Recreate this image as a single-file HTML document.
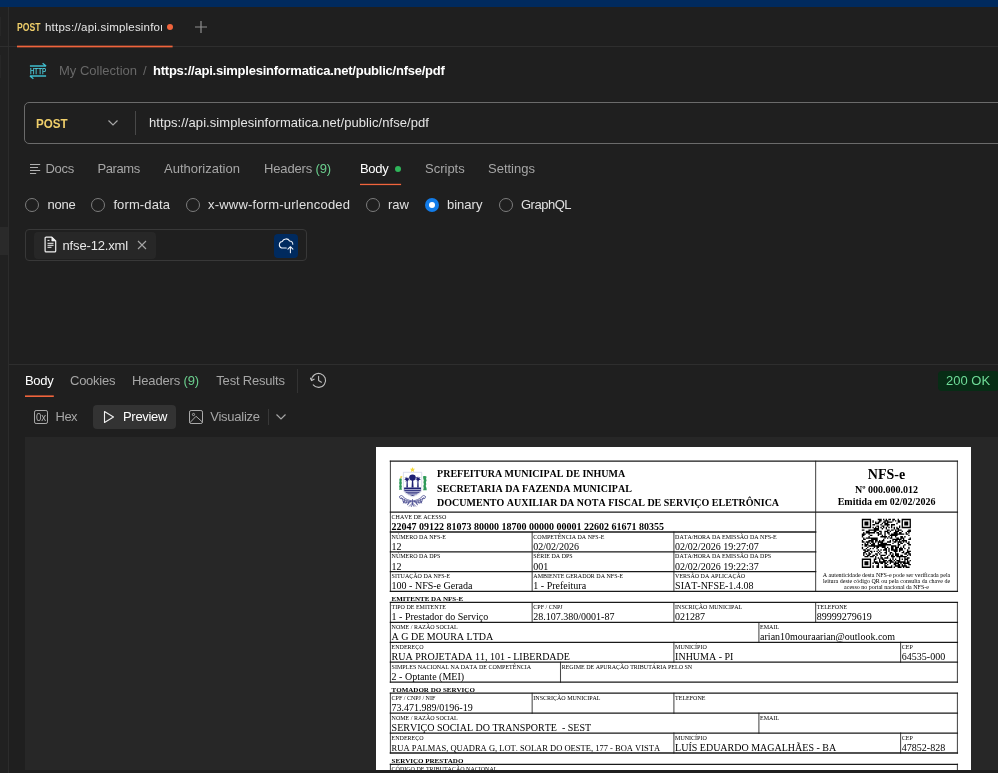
<!DOCTYPE html>
<html lang="pt-BR">
<head>
<meta charset="utf-8">
<title>Postman - nfse/pdf</title>
<style>
*{box-sizing:border-box;margin:0;padding:0}
html,body{width:998px;height:773px;overflow:hidden;background:#1f1f1f}
body{position:relative;font-family:"Liberation Sans",sans-serif;font-size:13px;color:#a6a6a6;-webkit-font-smoothing:antialiased}
.abs{position:absolute;white-space:pre}
.t{position:absolute;white-space:pre;line-height:16px;height:16px}
.w{color:#fff}
.g{color:#6bcf8e}
#ui{position:absolute;left:0;top:0;width:998px;height:773px;overflow:hidden;will-change:transform}
#topbar{left:0;top:0;width:998px;height:7px;background:#002a5e}
#leftline{left:8px;top:7px;width:1px;height:766px;background:#2c2c2c}
#lstrip{left:0;top:7px;width:8px;height:766px;background:#212121}
#tabline{left:0;top:46px;width:998px;height:1px;background:#2e2e2e}
#tabul{left:17px;top:45px;width:156px;height:2px;background:#e8623a}
.post{color:#f0cf6a;font-weight:bold}
#reqbox{left:24px;top:102px;width:990px;height:42px;border:1px solid #6b6b6b;border-radius:5px}
#reqdiv{left:135px;top:111px;width:1px;height:24px;background:#484848}
.radio{position:absolute;width:14px;height:14px;border:1px solid #7c7c7c;border-radius:50%;top:198px}
.radio.on{border:none;background:#127ce9}
.radio.on:after{content:"";position:absolute;left:4px;top:4px;width:6px;height:6px;border-radius:50%;background:#fff}
#filebox{left:25px;top:229px;width:282px;height:32px;border:1px solid #383838;border-radius:4px}
#chip{left:34px;top:232px;width:122px;height:27px;background:#272727;border-radius:4px}
#upbtn{left:274px;top:234px;width:24px;height:24px;background:#002a5e;border-radius:4px}
#respline{left:9px;top:364px;width:989px;height:1px;background:#2e2e2e}
#badge{left:938px;top:371px;width:61px;height:20px;background:#072c15;border-radius:4px}
#prevbtn{left:93px;top:405px;width:83px;height:24px;background:#333;border-radius:4px}
#viewer{left:25px;top:437px;width:973px;height:333px;background:#272727;overflow:hidden;will-change:transform}
#page{position:absolute;left:351px;top:10px;width:595px;height:842px;background:#fff;color:#000;font-family:"Liberation Serif",serif}
</style>
</head>
<body>
<div id="ui">
<div class="abs" id="topbar"></div>
<div class="abs" id="lstrip"></div>
<div class="abs" id="lsel" style="left:0;top:227px;width:8px;height:28px;background:#2a2a2a"></div>
<div class="abs" style="left:0;top:17px;width:1px;height:19px;background:#272727"></div>
<div class="abs" style="left:0;top:55px;width:1px;height:23px;background:#272727"></div>
<div class="abs" id="leftline"></div>
<div class="abs" id="tabline"></div>
<svg class="abs" style="left:0;top:40px" width="200" height="10"><rect x="17" y="5.65" width="155.6" height="1.7" fill="#f0643c"/></svg>

<!-- tab strip -->
<div class="t post" style="left:17px;top:20px;font-size:10px;transform:scaleX(0.86);transform-origin:0 50%">POST</div>
<div class="t" style="left:45px;top:19px;font-size:11.500px;letter-spacing:0.2px;color:#e6e6e6;width:117px;overflow:hidden">https://api.simplesinformatica.net</div>
<div class="abs" style="left:167px;top:24px;width:6px;height:6px;border-radius:50%;background:#f0643c"></div>
<svg class="abs" style="left:194px;top:20px" width="14" height="14" viewBox="0 0 14 14"><path d="M7 1v12M1 7h12" stroke="#8f8f8f" stroke-width="1.2" fill="none"/></svg>

<!-- breadcrumb -->
<svg class="abs" style="left:28px;top:60px" width="20" height="22" viewBox="0 0 20 22" fill="none" stroke="#3fbdce" stroke-width="1.4">
<path d="M1.900 6h16.200M18.100 6l-3.500-2.800M18.100 16h-16.200M1.900 16l3.500 2.800"/>
<text x="1.9" y="14.05" font-family="Liberation Sans, sans-serif" font-size="8.4" fill="#4fd0e0" stroke="#4fd0e0" stroke-width="0.250" textLength="16.200" lengthAdjust="spacingAndGlyphs">HTTP</text>
</svg>
<div class="t" style="left:59px;top:63px;color:#686868">My Collection</div>
<div class="t" style="left:143px;top:63px;color:#686868">/</div>
<div class="t w" style="left:153px;top:63px;font-weight:bold;letter-spacing:-0.235px">https://api.simplesinformatica.net/public/nfse/pdf</div>

<!-- request line -->
<div class="abs" id="reqbox"></div>
<div class="t post" style="left:36.300px;top:115.500px;font-size:12.500px;transform:scaleX(0.93);transform-origin:0 50%">POST</div>
<svg class="abs" style="left:107px;top:119px" width="12" height="8" viewBox="0 0 12 8"><path d="M1.5 1.5L6 6l4.5-4.5" stroke="#a6a6a6" stroke-width="1.2" fill="none"/></svg>
<div class="abs" id="reqdiv"></div>
<div class="t" style="left:149px;top:115px;color:#e6e6e6;letter-spacing:0.065px">https://api.simplesinformatica.net/public/nfse/pdf</div>

<!-- request tabs -->
<svg class="abs" style="left:30px;top:164px" width="11" height="10" viewBox="0 0 11 10"><path d="M0 .5h10.200M0 3.500h8M0 6.500h10.200M0 9.500h6.200" stroke="#b0b0b0" stroke-width="1" fill="none"/></svg>
<div class="t" style="left:45.400px;top:161px;letter-spacing:-0.25px">Docs</div>
<div class="t" style="left:97.500px;top:161px;letter-spacing:-0.4px">Params</div>
<div class="t" style="left:164px;top:161px">Authorization</div>
<div class="t" style="left:264px;top:161px;letter-spacing:-0.15px">Headers <span class="g">(9)</span></div>
<div class="t w" style="left:360px;top:161px;letter-spacing:-0.3px">Body</div>
<div class="abs" style="left:395px;top:166px;width:6px;height:6px;border-radius:50%;background:#2fb55a"></div>
<svg class="abs" style="left:350px;top:180px" width="60" height="10"><rect x="10" y="3.800" width="41.100" height="1.300" fill="#f0643c"/></svg>
<div class="t" style="left:425px;top:161px">Scripts</div>
<div class="t" style="left:488px;top:161px">Settings</div>

<!-- body type radios -->
<div class="radio" style="left:25px"></div><div class="t" style="left:47.500px;top:197px;color:#e0e0e0;letter-spacing:-0.2px">none</div>
<div class="radio" style="left:91px"></div><div class="t" style="left:113.400px;top:197px;color:#e0e0e0;letter-spacing:0.12px">form-data</div>
<div class="radio" style="left:186px"></div><div class="t" style="left:208px;top:197px;color:#e0e0e0;letter-spacing:0.2px">x-www-form-urlencoded</div>
<div class="radio" style="left:366px"></div><div class="t" style="left:388px;top:197px;color:#e0e0e0">raw</div>
<div class="radio on" style="left:425px"></div><div class="t" style="left:447px;top:197px;color:#e0e0e0">binary</div>
<div class="radio" style="left:499px"></div><div class="t" style="left:521px;top:197px;color:#e0e0e0;letter-spacing:-0.5px">GraphQL</div>

<!-- file box -->
<div class="abs" id="filebox"></div>
<div class="abs" id="chip"></div>
<svg class="abs" style="left:43.500px;top:235.700px" width="13" height="17" viewBox="0 0 13 17" fill="none" stroke="#f2f2f2" stroke-width="1.200" stroke-linejoin="round"><path d="M2.100 1.100h5.700l3.900 3.900v9.900a1 1 0 0 1-1 1h-8.600a1 1 0 0 1-1-1v-12.800a1 1 0 0 1 1-1z"/><path d="M7.800 1.100v3.900h3.900z" fill="#f2f2f2" stroke-width="0.600"/><path d="M3.500 4.400h2M3.500 7.300h6M3.500 9.300h6M3.500 11.300h4" stroke-width="1"/></svg>
<div class="t" style="left:62.500px;top:238px;color:#e8e8e8;letter-spacing:-0.15px">nfse-12.xml</div>
<svg class="abs" style="left:137px;top:240px" width="10" height="10" viewBox="0 0 10 10"><path d="M1 1l8 8M9 1l-8 8" stroke="#a6a6a6" stroke-width="1.1" fill="none"/></svg>
<div class="abs" id="upbtn"></div>
<svg class="abs" style="left:274px;top:234px" width="24" height="24" viewBox="0 0 24 24" fill="none" stroke="#eef3fb" stroke-width="1.050" stroke-linecap="round" stroke-linejoin="round"><path d="M12.300 13.900H7.600A3.300 3.300 0 0 1 8.200 7.500A4.100 4.100 0 0 1 15.600 7A3.200 3.200 0 0 1 18.800 10.200"/><path d="M16.400 18.700V12.700M13.900 15.200l2.500-2.500 2.500 2.500"/></svg>

<!-- response header -->
<div class="abs" id="respline"></div>
<div class="t w" style="left:25px;top:373px;letter-spacing:-0.3px">Body</div>
<svg class="abs" style="left:20px;top:390px" width="50" height="10"><rect x="5" y="5.400" width="28.800" height="1.600" fill="#f0643c"/></svg>
<div class="t" style="left:70px;top:373px;letter-spacing:-0.25px">Cookies</div>
<div class="t" style="left:132px;top:373px;letter-spacing:-0.15px">Headers <span class="g">(9)</span></div>
<div class="t" style="left:216.300px;top:373px;letter-spacing:-0.2px">Test Results</div>
<div class="abs" style="left:297px;top:369px;width:1px;height:24px;background:#333"></div>
<svg class="abs" style="left:309.500px;top:372.400px" width="18" height="18" viewBox="0 0 18 18" fill="none" stroke="#bdbdbd" stroke-width="1.100" stroke-linecap="round" stroke-linejoin="round"><path d="M1.600 8.400A7 7 0 1 1 3.240 12.900"/><path d="M0.200 6.100l1.400 2.500 2.500-1.400"/><path d="M8.600 4.300v4.300l2.800 1.600"/></svg>
<div class="abs" id="badge"></div>
<div class="t" style="left:946px;top:373px;color:#6fdc98">200 OK</div>

<!-- view mode row -->
<svg class="abs" style="left:34px;top:410px" width="14" height="14" viewBox="0 0 14 14" fill="none" stroke="#ababab" stroke-width="1"><rect x="0.500" y="0.500" width="13" height="13" rx="1.600"/><text x="2" y="10.600" font-family="Liberation Sans, sans-serif" font-size="10" fill="#b4b4b4" stroke="none" textLength="10.200" lengthAdjust="spacingAndGlyphs">0x</text></svg>
<div class="t" style="left:55.500px;top:409px;letter-spacing:-0.5px">Hex</div>
<div class="abs" id="prevbtn"></div>
<svg class="abs" style="left:103px;top:410px" width="12" height="14" viewBox="0 0 12 14"><path d="M1.5 1.5l9 5.5-9 5.5z" fill="none" stroke="#f0f0f0" stroke-width="1.1" stroke-linejoin="round"/></svg>
<div class="t w" style="left:123px;top:409px;letter-spacing:-0.3px">Preview</div>
<svg class="abs" style="left:189px;top:410px" width="14" height="14" viewBox="0 0 14 14" fill="none" stroke="#ababab" stroke-width="1" stroke-linejoin="round"><rect x="0.500" y="0.500" width="13" height="13" rx="1.600"/><circle cx="4.500" cy="4.500" r="1.100"/><path d="M0.900 12.700L7 6.300l6.400 5.700"/></svg>
<div class="t" style="left:210.300px;top:409px;letter-spacing:-0.25px">Visualize</div>
<div class="abs" style="left:268px;top:409px;width:1px;height:16px;background:#383838"></div>
<svg class="abs" style="left:275px;top:413px" width="12" height="8" viewBox="0 0 12 8"><path d="M1.5 1.5L6 6l4.5-4.5" stroke="#a6a6a6" stroke-width="1.2" fill="none"/></svg>

<!-- PDF viewer -->
<div class="abs" id="viewer">
<div id="page">
<svg class="abs" style="left:0;top:0;white-space:pre;font-kerning:none" width="595" height="842" viewBox="0 0 595 842" xml:space="preserve" font-family="Liberation Serif, serif" fill="#000">
<path d="M14.4 14.2L14.4 144.4M581.4 14.2L581.4 144.4M439.65 14.2L439.65 144.4M156.15 85.0L156.15 144.4M297.9 85.0L297.9 144.4M14.4 155.4L14.4 235.2M581.4 155.4L581.4 235.2M156.15 155.4L156.15 175.4M297.9 155.4L297.9 175.4M439.65 155.4L439.65 175.4M382.9 175.4L382.9 195.3M297.9 195.3L297.9 215.2M524.6 195.3L524.6 215.2M184.5 215.2L184.5 235.2M14.4 246.2L14.4 306.0M581.4 246.2L581.4 306.0M156.15 246.2L156.15 266.2M297.9 246.2L297.9 266.2M382.9 266.2L382.9 286.1M297.9 286.1L297.9 306.0M524.6 286.1L524.6 306.0M14.4 317.3L14.4 337.2M581.4 317.3L581.4 337.2" stroke="#484848" stroke-width="1.05" fill="none" stroke-linecap="square"/>
<path d="M14.4 14.2L581.4 14.2M14.4 65.2L581.4 65.2M14.4 85.0L439.65 85.0M14.4 104.8L439.65 104.8M14.4 124.6L439.65 124.6M14.4 144.4L581.4 144.4M14.4 155.4L581.4 155.4M14.4 175.4L581.4 175.4M14.4 195.3L581.4 195.3M14.4 215.2L581.4 215.2M14.4 235.2L581.4 235.2M14.4 246.2L581.4 246.2M14.4 266.2L581.4 266.2M14.4 286.1L581.4 286.1M14.4 306.0L581.4 306.0M14.4 317.3L581.4 317.3M14.4 337.2L581.4 337.2" stroke="#1a1a1a" stroke-width="1.3" fill="none" stroke-linecap="square"/>
<text x="61.1" y="29.7" font-size="10" font-weight="bold">PREFEITURA MUNICIPAL DE INHUMA</text>
<text x="61.1" y="45.0" font-size="10" font-weight="bold">SECRETARIA DA FAZENDA MUNICIPAL</text>
<text x="61.1" y="58.9" font-size="10" font-weight="bold">DOCUMENTO AUXILIAR DA NOTA FISCAL DE SERVIÇO ELETRÔNICA</text>
<text x="510.52" y="31.7" font-size="14" font-weight="bold" text-anchor="middle">NFS-e</text>
<text x="510.52" y="45.9" font-size="10" font-weight="bold" text-anchor="middle">Nº 000.000.012</text>
<text x="510.52" y="57.9" font-size="10" font-weight="bold" text-anchor="middle">Emitida em 02/02/2026</text>
<text x="510.52" y="130.0" font-size="6" text-anchor="middle">A autenticidade desta NFS-e pode ser verificada pela</text>
<text x="510.52" y="135.8" font-size="6" text-anchor="middle">leitura deste código QR ou pela consulta da chave de</text>
<text x="510.52" y="141.6" font-size="6" text-anchor="middle">acesso no portal nacional da NFS-e</text>
<text x="15.6" y="71.7" font-size="6">CHAVE DE ACESSO</text>
<text x="15.6" y="83.0" font-size="10" font-weight="bold">22047 09122 81073 80000 18700 00000 00001 22602 61671 80355</text>
<text x="15.6" y="91.5" font-size="6">NÚMERO DA NFS-E</text>
<text x="15.6" y="102.8" font-size="10">12</text>
<text x="157.35" y="91.5" font-size="6">COMPETÊNCIA DA NFS-E</text>
<text x="157.35" y="102.8" font-size="10">02/02/2026</text>
<text x="299.1" y="91.5" font-size="6">DATA/HORA DA EMISSÃO DA NFS-E</text>
<text x="299.1" y="102.8" font-size="10">02/02/2026 19:27:07</text>
<text x="15.6" y="111.3" font-size="6">NÚMERO DA DPS</text>
<text x="15.6" y="122.6" font-size="10">12</text>
<text x="157.35" y="111.3" font-size="6">SÉRIE DA DPS</text>
<text x="157.35" y="122.6" font-size="10">001</text>
<text x="299.1" y="111.3" font-size="6">DATA/HORA DA EMISSÃO DA DPS</text>
<text x="299.1" y="122.6" font-size="10">02/02/2026 19:22:37</text>
<text x="15.6" y="131.1" font-size="6">SITUAÇÃO DA NFS-E</text>
<text x="15.6" y="142.4" font-size="10">100 - NFS-e Gerada</text>
<text x="157.35" y="131.1" font-size="6">AMBIENTE GERADOR DA NFS-E</text>
<text x="157.35" y="142.4" font-size="10">1 - Prefeitura</text>
<text x="299.1" y="131.1" font-size="6">VERSÃO DA APLICAÇÃO</text>
<text x="299.1" y="142.4" font-size="10">SIAT-NFSE-1.4.08</text>
<text x="15.6" y="154.0" font-size="7" font-weight="bold">EMITENTE DA NFS-E</text>
<text x="15.6" y="161.9" font-size="6">TIPO DE EMITENTE</text>
<text x="15.6" y="173.4" font-size="10">1 - Prestador do Serviço</text>
<text x="157.35" y="161.9" font-size="6">CPF / CNPJ</text>
<text x="157.35" y="173.4" font-size="10">28.107.380/0001-87</text>
<text x="299.1" y="161.9" font-size="6">INSCRIÇÃO MUNICIPAL</text>
<text x="299.1" y="173.4" font-size="10">021287</text>
<text x="440.85" y="161.9" font-size="6">TELEFONE</text>
<text x="440.85" y="173.4" font-size="10">89999279619</text>
<text x="15.6" y="181.9" font-size="6">NOME / RAZÃO SOCIAL</text>
<text x="15.6" y="193.3" font-size="10">A G DE MOURA LTDA</text>
<text x="384.1" y="181.9" font-size="6">EMAIL</text>
<text x="384.1" y="193.3" font-size="10">arian10mouraarian@outlook.com</text>
<text x="15.6" y="201.8" font-size="6">ENDEREÇO</text>
<text x="15.6" y="213.2" font-size="10">RUA PROJETADA 11, 101 - LIBERDADE</text>
<text x="299.1" y="201.8" font-size="6">MUNICÍPIO</text>
<text x="299.1" y="213.2" font-size="10">INHUMA - PI</text>
<text x="525.8" y="201.8" font-size="6">CEP</text>
<text x="525.8" y="213.2" font-size="10">64535-000</text>
<text x="15.6" y="221.7" font-size="6">SIMPLES NACIONAL NA DATA DE COMPETÊNCIA</text>
<text x="15.6" y="233.2" font-size="10">2 - Optante (MEI)</text>
<text x="185.7" y="221.7" font-size="6">REGIME DE APURAÇÃO TRIBUTÁRIA PELO SN</text>
<text x="15.6" y="244.9" font-size="7" font-weight="bold">TOMADOR DO SERVIÇO</text>
<text x="15.6" y="252.7" font-size="6">CPF / CNPJ / NIF</text>
<text x="15.6" y="264.2" font-size="10">73.471.989/0196-19</text>
<text x="157.35" y="252.7" font-size="6">INSCRIÇÃO MUNICIPAL</text>
<text x="299.1" y="252.7" font-size="6">TELEFONE</text>
<text x="15.6" y="272.7" font-size="6">NOME / RAZÃO SOCIAL</text>
<text x="15.6" y="284.1" font-size="10">SERVIÇO SOCIAL DO TRANSPORTE&#160; - SEST</text>
<text x="384.1" y="272.7" font-size="6">EMAIL</text>
<text x="15.6" y="292.6" font-size="6">ENDEREÇO</text>
<text x="15.6" y="304.0" font-size="8.5">RUA PALMAS, QUADRA G, LOT. SOLAR DO OESTE, 177 - BOA VISTA</text>
<text x="299.1" y="292.6" font-size="6">MUNICÍPIO</text>
<text x="299.1" y="304.0" font-size="10">LUÍS EDUARDO MAGALHÃES - BA</text>
<text x="525.8" y="292.6" font-size="6">CEP</text>
<text x="525.8" y="304.0" font-size="10">47852-828</text>
<text x="15.6" y="315.7" font-size="7" font-weight="bold">SERVIÇO PRESTADO</text>
<text x="15.6" y="323.8" font-size="6">CÓDIGO DE TRIBUTAÇÃO NACIONAL</text>
<path d="M485.8 71.8h9.29v1.38h-9.29zM501.72 71.8h3.98v1.38h-3.98zM507.03 71.8h1.33v1.38h-1.33zM509.69 71.8h1.33v1.38h-1.33zM512.34 71.8h2.65v1.38h-2.65zM516.32 71.8h2.65v1.38h-2.65zM521.63 71.8h1.33v1.38h-1.33zM525.61 71.8h9.29v1.38h-9.29zM485.8 73.13h1.33v1.38h-1.33zM493.76 73.13h1.33v1.38h-1.33zM496.42 73.13h1.33v1.38h-1.33zM503.05 73.13h2.65v1.38h-2.65zM508.36 73.13h3.98v1.38h-3.98zM516.32 73.13h1.33v1.38h-1.33zM518.98 73.13h1.33v1.38h-1.33zM521.63 73.13h2.65v1.38h-2.65zM525.61 73.13h1.33v1.38h-1.33zM533.57 73.13h1.33v1.38h-1.33zM485.8 74.45h1.33v1.38h-1.33zM488.45 74.45h3.98v1.38h-3.98zM493.76 74.45h1.33v1.38h-1.33zM496.42 74.45h1.33v1.38h-1.33zM499.07 74.45h1.33v1.38h-1.33zM501.72 74.45h2.65v1.38h-2.65zM507.03 74.45h2.65v1.38h-2.65zM511.01 74.45h5.31v1.38h-5.31zM521.63 74.45h2.65v1.38h-2.65zM525.61 74.45h1.33v1.38h-1.33zM528.26 74.45h3.98v1.38h-3.98zM533.57 74.45h1.33v1.38h-1.33zM485.8 75.78h1.33v1.38h-1.33zM488.45 75.78h3.98v1.38h-3.98zM493.76 75.78h1.33v1.38h-1.33zM499.07 75.78h3.98v1.38h-3.98zM505.71 75.78h1.33v1.38h-1.33zM508.36 75.78h3.98v1.38h-3.98zM520.3 75.78h1.33v1.38h-1.33zM525.61 75.78h1.33v1.38h-1.33zM528.26 75.78h3.98v1.38h-3.98zM533.57 75.78h1.33v1.38h-1.33zM485.8 77.11h1.33v1.38h-1.33zM488.45 77.11h3.98v1.38h-3.98zM493.76 77.11h1.33v1.38h-1.33zM496.42 77.11h2.65v1.38h-2.65zM504.38 77.11h1.33v1.38h-1.33zM508.36 77.11h5.31v1.38h-5.31zM514.99 77.11h3.98v1.38h-3.98zM525.61 77.11h1.33v1.38h-1.33zM528.26 77.11h3.98v1.38h-3.98zM533.57 77.11h1.33v1.38h-1.33zM485.8 78.44h1.33v1.38h-1.33zM493.76 78.44h1.33v1.38h-1.33zM500.4 78.44h2.65v1.38h-2.65zM505.71 78.44h2.65v1.38h-2.65zM511.01 78.44h1.33v1.38h-1.33zM514.99 78.44h1.33v1.38h-1.33zM522.96 78.44h1.33v1.38h-1.33zM525.61 78.44h1.33v1.38h-1.33zM533.57 78.44h1.33v1.38h-1.33zM485.8 79.76h9.29v1.38h-9.29zM496.42 79.76h1.33v1.38h-1.33zM499.07 79.76h1.33v1.38h-1.33zM501.72 79.76h1.33v1.38h-1.33zM504.38 79.76h1.33v1.38h-1.33zM507.03 79.76h1.33v1.38h-1.33zM509.69 79.76h1.33v1.38h-1.33zM512.34 79.76h1.33v1.38h-1.33zM514.99 79.76h1.33v1.38h-1.33zM517.65 79.76h1.33v1.38h-1.33zM520.3 79.76h1.33v1.38h-1.33zM522.96 79.76h1.33v1.38h-1.33zM525.61 79.76h9.29v1.38h-9.29zM497.74 81.09h5.31v1.38h-5.31zM505.71 81.09h1.33v1.38h-1.33zM509.69 81.09h1.33v1.38h-1.33zM517.65 81.09h1.33v1.38h-1.33zM520.3 81.09h2.65v1.38h-2.65zM485.8 82.42h2.65v1.38h-2.65zM492.44 82.42h10.62v1.38h-10.62zM511.01 82.42h2.65v1.38h-2.65zM514.99 82.42h2.65v1.38h-2.65zM518.98 82.42h1.33v1.38h-1.33zM521.63 82.42h3.98v1.38h-3.98zM532.25 82.42h2.65v1.38h-2.65zM489.78 83.74h3.98v1.38h-3.98zM497.74 83.74h2.65v1.38h-2.65zM503.05 83.74h2.65v1.38h-2.65zM508.36 83.74h3.98v1.38h-3.98zM513.67 83.74h1.33v1.38h-1.33zM518.98 83.74h3.98v1.38h-3.98zM525.61 83.74h1.33v1.38h-1.33zM530.92 83.74h3.98v1.38h-3.98zM487.13 85.07h1.33v1.38h-1.33zM489.78 85.07h9.29v1.38h-9.29zM500.4 85.07h2.65v1.38h-2.65zM504.38 85.07h1.33v1.38h-1.33zM508.36 85.07h1.33v1.38h-1.33zM511.01 85.07h2.65v1.38h-2.65zM517.65 85.07h3.98v1.38h-3.98zM522.96 85.07h2.65v1.38h-2.65zM529.59 85.07h1.33v1.38h-1.33zM532.25 85.07h1.33v1.38h-1.33zM485.8 86.4h3.98v1.38h-3.98zM492.44 86.4h1.33v1.38h-1.33zM501.72 86.4h3.98v1.38h-3.98zM508.36 86.4h1.33v1.38h-1.33zM512.34 86.4h1.33v1.38h-1.33zM514.99 86.4h13.27v1.38h-13.27zM529.59 86.4h2.65v1.38h-2.65zM485.8 87.72h2.65v1.38h-2.65zM493.76 87.72h2.65v1.38h-2.65zM501.72 87.72h1.33v1.38h-1.33zM505.71 87.72h1.33v1.38h-1.33zM508.36 87.72h1.33v1.38h-1.33zM513.67 87.72h7.96v1.38h-7.96zM532.25 87.72h1.33v1.38h-1.33zM485.8 89.05h1.33v1.38h-1.33zM492.44 89.05h1.33v1.38h-1.33zM504.38 89.05h6.64v1.38h-6.64zM512.34 89.05h1.33v1.38h-1.33zM514.99 89.05h1.33v1.38h-1.33zM518.98 89.05h1.33v1.38h-1.33zM524.28 89.05h2.65v1.38h-2.65zM528.26 89.05h1.33v1.38h-1.33zM487.13 90.38h1.33v1.38h-1.33zM489.78 90.38h11.94v1.38h-11.94zM508.36 90.38h1.33v1.38h-1.33zM511.01 90.38h1.33v1.38h-1.33zM513.67 90.38h2.65v1.38h-2.65zM520.3 90.38h2.65v1.38h-2.65zM524.28 90.38h3.98v1.38h-3.98zM533.57 90.38h1.33v1.38h-1.33zM487.13 91.71h2.65v1.38h-2.65zM495.09 91.71h6.64v1.38h-6.64zM507.03 91.71h1.33v1.38h-1.33zM516.32 91.71h9.29v1.38h-9.29zM526.94 91.71h1.33v1.38h-1.33zM532.25 91.71h2.65v1.38h-2.65zM485.8 93.03h1.33v1.38h-1.33zM492.44 93.03h5.31v1.38h-5.31zM499.07 93.03h2.65v1.38h-2.65zM503.05 93.03h1.33v1.38h-1.33zM505.71 93.03h2.65v1.38h-2.65zM513.67 93.03h1.33v1.38h-1.33zM516.32 93.03h1.33v1.38h-1.33zM518.98 93.03h2.65v1.38h-2.65zM522.96 93.03h1.33v1.38h-1.33zM525.61 93.03h5.31v1.38h-5.31zM485.8 94.36h2.65v1.38h-2.65zM489.78 94.36h3.98v1.38h-3.98zM495.09 94.36h2.65v1.38h-2.65zM499.07 94.36h1.33v1.38h-1.33zM501.72 94.36h5.31v1.38h-5.31zM511.01 94.36h3.98v1.38h-3.98zM517.65 94.36h2.65v1.38h-2.65zM521.63 94.36h3.98v1.38h-3.98zM526.94 94.36h1.33v1.38h-1.33zM529.59 94.36h1.33v1.38h-1.33zM532.25 94.36h1.33v1.38h-1.33zM488.45 95.69h1.33v1.38h-1.33zM491.11 95.69h1.33v1.38h-1.33zM493.76 95.69h1.33v1.38h-1.33zM496.42 95.69h2.65v1.38h-2.65zM501.72 95.69h1.33v1.38h-1.33zM504.38 95.69h6.64v1.38h-6.64zM516.32 95.69h1.33v1.38h-1.33zM521.63 95.69h1.33v1.38h-1.33zM524.28 95.69h2.65v1.38h-2.65zM530.92 95.69h2.65v1.38h-2.65zM485.8 97.01h1.33v1.38h-1.33zM488.45 97.01h3.98v1.38h-3.98zM495.09 97.01h3.98v1.38h-3.98zM501.72 97.01h13.27v1.38h-13.27zM521.63 97.01h2.65v1.38h-2.65zM528.26 97.01h1.33v1.38h-1.33zM532.25 97.01h2.65v1.38h-2.65zM488.45 98.34h2.65v1.38h-2.65zM492.44 98.34h17.25v1.38h-17.25zM514.99 98.34h5.31v1.38h-5.31zM521.63 98.34h1.33v1.38h-1.33zM526.94 98.34h1.33v1.38h-1.33zM485.8 99.67h1.33v1.38h-1.33zM491.11 99.67h1.33v1.38h-1.33zM497.74 99.67h1.33v1.38h-1.33zM500.4 99.67h2.65v1.38h-2.65zM505.71 99.67h3.98v1.38h-3.98zM511.01 99.67h1.33v1.38h-1.33zM514.99 99.67h2.65v1.38h-2.65zM518.98 99.67h3.98v1.38h-3.98zM524.28 99.67h1.33v1.38h-1.33zM526.94 99.67h1.33v1.38h-1.33zM532.25 99.67h1.33v1.38h-1.33zM485.8 100.99h1.33v1.38h-1.33zM489.78 100.99h1.33v1.38h-1.33zM493.76 100.99h1.33v1.38h-1.33zM496.42 100.99h1.33v1.38h-1.33zM500.4 100.99h1.33v1.38h-1.33zM508.36 100.99h2.65v1.38h-2.65zM512.34 100.99h1.33v1.38h-1.33zM514.99 100.99h2.65v1.38h-2.65zM518.98 100.99h2.65v1.38h-2.65zM522.96 100.99h3.98v1.38h-3.98zM528.26 100.99h1.33v1.38h-1.33zM532.25 100.99h1.33v1.38h-1.33zM487.13 102.32h2.65v1.38h-2.65zM491.11 102.32h2.65v1.38h-2.65zM501.72 102.32h1.33v1.38h-1.33zM504.38 102.32h1.33v1.38h-1.33zM507.03 102.32h3.98v1.38h-3.98zM512.34 102.32h1.33v1.38h-1.33zM514.99 102.32h6.64v1.38h-6.64zM522.96 102.32h3.98v1.38h-3.98zM530.92 102.32h1.33v1.38h-1.33zM488.45 103.65h3.98v1.38h-3.98zM493.76 103.65h2.65v1.38h-2.65zM497.74 103.65h1.33v1.38h-1.33zM500.4 103.65h1.33v1.38h-1.33zM503.05 103.65h1.33v1.38h-1.33zM509.69 103.65h1.33v1.38h-1.33zM512.34 103.65h1.33v1.38h-1.33zM517.65 103.65h3.98v1.38h-3.98zM522.96 103.65h1.33v1.38h-1.33zM526.94 103.65h1.33v1.38h-1.33zM530.92 103.65h3.98v1.38h-3.98zM487.13 104.98h2.65v1.38h-2.65zM492.44 104.98h1.33v1.38h-1.33zM495.09 104.98h1.33v1.38h-1.33zM501.72 104.98h1.33v1.38h-1.33zM504.38 104.98h1.33v1.38h-1.33zM508.36 104.98h2.65v1.38h-2.65zM513.67 104.98h2.65v1.38h-2.65zM518.98 104.98h1.33v1.38h-1.33zM525.61 104.98h2.65v1.38h-2.65zM529.59 104.98h3.98v1.38h-3.98zM487.13 106.3h1.33v1.38h-1.33zM489.78 106.3h1.33v1.38h-1.33zM492.44 106.3h2.65v1.38h-2.65zM499.07 106.3h2.65v1.38h-2.65zM503.05 106.3h1.33v1.38h-1.33zM509.69 106.3h1.33v1.38h-1.33zM513.67 106.3h1.33v1.38h-1.33zM516.32 106.3h1.33v1.38h-1.33zM518.98 106.3h3.98v1.38h-3.98zM528.26 106.3h2.65v1.38h-2.65zM532.25 106.3h2.65v1.38h-2.65zM487.13 107.63h1.33v1.38h-1.33zM491.11 107.63h2.65v1.38h-2.65zM496.42 107.63h2.65v1.38h-2.65zM500.4 107.63h1.33v1.38h-1.33zM504.38 107.63h5.31v1.38h-5.31zM512.34 107.63h1.33v1.38h-1.33zM514.99 107.63h2.65v1.38h-2.65zM518.98 107.63h3.98v1.38h-3.98zM524.28 107.63h2.65v1.38h-2.65zM530.92 107.63h1.33v1.38h-1.33zM533.57 107.63h1.33v1.38h-1.33zM488.45 108.96h3.98v1.38h-3.98zM493.76 108.96h3.98v1.38h-3.98zM499.07 108.96h1.33v1.38h-1.33zM504.38 108.96h1.33v1.38h-1.33zM511.01 108.96h1.33v1.38h-1.33zM514.99 108.96h3.98v1.38h-3.98zM520.3 108.96h10.62v1.38h-10.62zM499.07 110.28h1.33v1.38h-1.33zM501.72 110.28h1.33v1.38h-1.33zM504.38 110.28h2.65v1.38h-2.65zM508.36 110.28h3.98v1.38h-3.98zM516.32 110.28h1.33v1.38h-1.33zM522.96 110.28h1.33v1.38h-1.33zM528.26 110.28h1.33v1.38h-1.33zM530.92 110.28h2.65v1.38h-2.65zM485.8 111.61h9.29v1.38h-9.29zM497.74 111.61h2.65v1.38h-2.65zM503.05 111.61h1.33v1.38h-1.33zM505.71 111.61h2.65v1.38h-2.65zM513.67 111.61h1.33v1.38h-1.33zM516.32 111.61h1.33v1.38h-1.33zM518.98 111.61h1.33v1.38h-1.33zM522.96 111.61h1.33v1.38h-1.33zM525.61 111.61h1.33v1.38h-1.33zM528.26 111.61h3.98v1.38h-3.98zM485.8 112.94h1.33v1.38h-1.33zM493.76 112.94h1.33v1.38h-1.33zM497.74 112.94h1.33v1.38h-1.33zM503.05 112.94h1.33v1.38h-1.33zM507.03 112.94h3.98v1.38h-3.98zM512.34 112.94h3.98v1.38h-3.98zM517.65 112.94h1.33v1.38h-1.33zM520.3 112.94h3.98v1.38h-3.98zM528.26 112.94h1.33v1.38h-1.33zM530.92 112.94h1.33v1.38h-1.33zM533.57 112.94h1.33v1.38h-1.33zM485.8 114.26h1.33v1.38h-1.33zM488.45 114.26h3.98v1.38h-3.98zM493.76 114.26h1.33v1.38h-1.33zM497.74 114.26h3.98v1.38h-3.98zM503.05 114.26h6.64v1.38h-6.64zM511.01 114.26h1.33v1.38h-1.33zM513.67 114.26h3.98v1.38h-3.98zM518.98 114.26h1.33v1.38h-1.33zM521.63 114.26h7.96v1.38h-7.96zM530.92 114.26h2.65v1.38h-2.65zM485.8 115.59h1.33v1.38h-1.33zM488.45 115.59h3.98v1.38h-3.98zM493.76 115.59h1.33v1.38h-1.33zM496.42 115.59h1.33v1.38h-1.33zM499.07 115.59h3.98v1.38h-3.98zM504.38 115.59h2.65v1.38h-2.65zM508.36 115.59h2.65v1.38h-2.65zM513.67 115.59h1.33v1.38h-1.33zM517.65 115.59h5.31v1.38h-5.31zM524.28 115.59h1.33v1.38h-1.33zM526.94 115.59h6.64v1.38h-6.64zM485.8 116.92h1.33v1.38h-1.33zM488.45 116.92h3.98v1.38h-3.98zM493.76 116.92h1.33v1.38h-1.33zM501.72 116.92h1.33v1.38h-1.33zM508.36 116.92h1.33v1.38h-1.33zM511.01 116.92h1.33v1.38h-1.33zM517.65 116.92h2.65v1.38h-2.65zM521.63 116.92h2.65v1.38h-2.65zM525.61 116.92h1.33v1.38h-1.33zM528.26 116.92h1.33v1.38h-1.33zM532.25 116.92h2.65v1.38h-2.65zM485.8 118.25h1.33v1.38h-1.33zM493.76 118.25h1.33v1.38h-1.33zM496.42 118.25h1.33v1.38h-1.33zM500.4 118.25h2.65v1.38h-2.65zM508.36 118.25h2.65v1.38h-2.65zM514.99 118.25h1.33v1.38h-1.33zM518.98 118.25h5.31v1.38h-5.31zM525.61 118.25h5.31v1.38h-5.31zM485.8 119.57h9.29v1.38h-9.29zM496.42 119.57h1.33v1.38h-1.33zM500.4 119.57h2.65v1.38h-2.65zM505.71 119.57h1.33v1.38h-1.33zM508.36 119.57h7.96v1.38h-7.96zM517.65 119.57h1.33v1.38h-1.33zM521.63 119.57h3.98v1.38h-3.98zM526.94 119.57h1.33v1.38h-1.33zM529.59 119.57h3.98v1.38h-3.98z" fill="#000"/>
<g transform="translate(-376,-447)">
<path d="M412.5 466.9l0.75 1.75 1.9 0.15-1.45 1.25 0.45 1.85-1.65-1-1.65 1 0.45-1.85-1.45-1.25 1.9-0.15z" fill="#f3d93b"/>
<path d="M403.4 472.3h18.3v17.2c0 3.2-4.4 5.6-9.15 7.3-4.75-1.7-9.15-4.1-9.15-7.3z" fill="#fff" stroke="#c3c7df" stroke-width="0.6"/>
<path d="M404.1 487.6h16.9v2.1c-0.3 2.7-4.2 4.8-8.45 6.3-4.25-1.5-8.15-3.6-8.45-6.3z" fill="#1d1f72"/>
<path d="M404.3 489.6h16.5M404.8 491.4h15.5M406.3 493.1h12.5M409 494.7h7" stroke="#e4e6f6" stroke-width="0.75" fill="none"/>
<ellipse cx="412.5" cy="477.6" rx="3.3" ry="3.1" fill="#1d1f72"/>
<path d="M412 480h1.1l0.5 7.6h-2.1z" fill="#1d1f72"/>
<path d="M406.9 476.6l0.6 1.7 1.9-0.8-1.1 1.6 1.6 1.1-2 0.1 0.1 1.8-1.1-1.5-1.3 1.4 0.3-1.9-1.9-0.2 1.6-1-1-1.6 1.8 0.7z" fill="#1d1f72"/>
<path d="M418 476.2l0.6 1.7 1.9-0.8-1.1 1.6 1.6 1.1-2 0.1 0.1 1.8-1.1-1.5-1.3 1.4 0.3-1.9-1.9-0.2 1.6-1-1-1.6 1.8 0.7z" fill="#1d1f72"/>
<path d="M406.7 480.5h0.9l0.35 7.1h-1.6z M417.5 480.2h0.9l0.35 7.4h-1.6z" fill="#1d1f72"/>
<path d="M399.3 479.5c0.2-1.6 2.4-1.6 2.5 0l-0.3 2 0.4 1.6-0.5 1.7 0.5 1.6-0.4 1.7 0.5 1.7h-3l0.5-1.7-0.4-1.7 0.5-1.6-0.5-1.7 0.4-1.6z" fill="#2f9a58"/>
<path d="M400.2 476.4l1.3-0.5 1 0.6-0.8 1.6-1.4 0.6z" fill="#efd955"/>
<path d="M423 476.4c1-0.8 3-0.6 3.6 0.4l-0.5 2 0.5 1.8-0.7 1.7 0.4 2-0.6 1.8 0.8 1.9 0.2 2.3h-3.6l0.6-2.3-0.4-1.9 0.6-1.8-0.5-2 0.4-1.7-0.5-1.8z" fill="#2f9a58"/>
<g fill="none" stroke="#2a2c7c" stroke-width="0.8" stroke-linecap="round" opacity="0.85">
<path d="M399.6 496.4c1.2-1.6 3.2-1 3.4 0.4 2.6 2.6 6 3.6 9.5 4.2 3.5-0.6 6.900-1.600 9.500-4.200 0.200-1.400 2.200-2 3.400-0.400"/>
<path d="M399.6 496.600c-0.600 1.500 0.800 2.600 2.200 2.100M425.400 496.600c0.600 1.500-0.800 2.600-2.200 2.100"/>
<path d="M402.400 498.800l0.900 3.100M404.600 499.600l0.300 3.400M407 500.800l-1 2.600M422.600 498.800l-0.900 3.100M420.400 499.600l-0.300 3.400M418 500.800l1 2.600"/>
<path d="M403.500 501.900c2.800 0.800 5.200 0.400 6.800-0.300M421.500 501.900c-2.800 0.800-5.200 0.400-6.800-0.300"/>
<path d="M412.500 499.500v4.500M412.500 503l-3.200 3.200M412.500 503l3.200 3.200M410.600 501.800l-2.800 2.400M414.400 501.800l2.800 2.400M412.500 504l-1.200 2.600M412.500 504l1.400 2.400"/>
<path d="M401 497.6c3 2.6 7 3.9 11.5 4.3 4.5-0.4 8.5-1.7 11.5-4.3M404 500.9l-0.600 2.100M421 500.9l0.600 2.100M408.5 502.4l-0.800 2.400M416.5 502.4l0.800 2.400"/>
</g>
</g>
</svg>
</div>
</div>
</div>
</body>
</html>
